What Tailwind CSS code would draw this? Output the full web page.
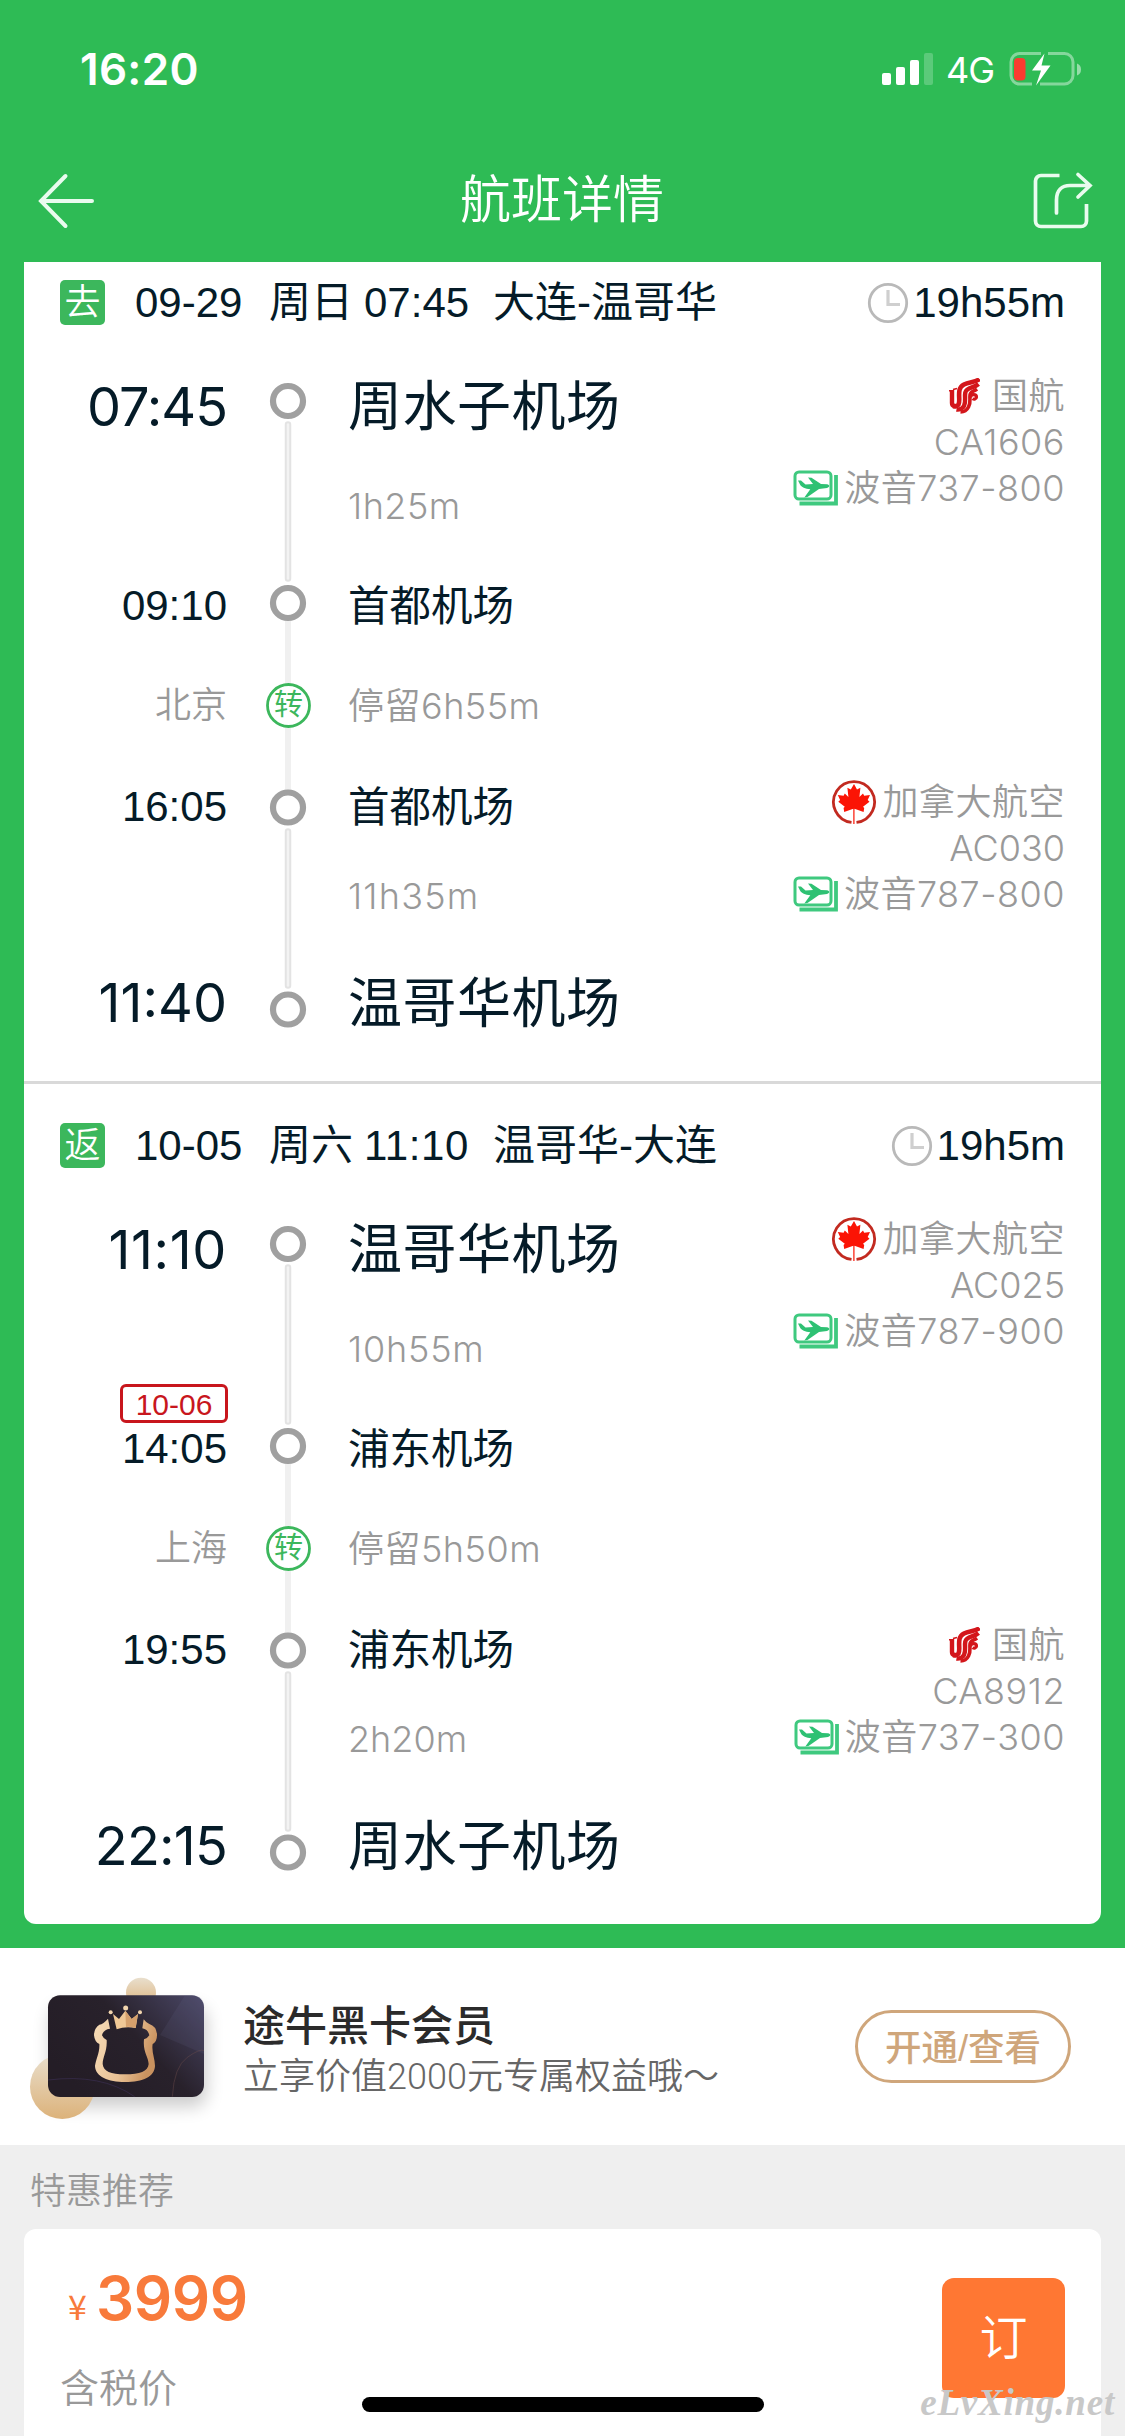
<!DOCTYPE html>
<html lang="zh-CN">
<head>
<meta charset="utf-8">
<title>航班详情</title>
<script src="https://cdn.jsdelivr.net/npm/@tailwindcss/browser@4"></script>
</head>
<body class="w-[1125px] h-[2436px] overflow-hidden relative bg-[#efefef] font-['Liberation_Sans','Noto_Sans_CJK_SC',sans-serif] text-[#051b28] whitespace-nowrap">

<svg class="hidden">
  <defs>
    <symbol id="clock" viewBox="0 0 42 42">
      <circle cx="21" cy="21" r="18.700" fill="none" stroke="#b9b9b9" stroke-width="2.800"/>
      <path d="M21 8v14.500h12" fill="none" stroke="#cfcfcf" stroke-width="3.200"/>
    </symbol>
    <symbol id="plane" viewBox="0 0 46 36">
      <rect x="2" y="2" width="36" height="27" rx="4" fill="none" stroke="#3fc97f" stroke-width="3"/>
      <path d="M43 5v28.500H6.500" fill="none" stroke="#3fc97f" stroke-width="3.800"/>
      <path d="M5 10.500l3 0 4.500 4 7.500-.5-5-6.500 3.500 .2 9.500 6.300 6 .3c3 .5 3 3 0 3.600l-8 1L14.500 27l-3.200 .4 6-8.200c-5-.3-9-2-10.300-4.700z" fill="#2ec173"/>
    </symbol>
    <symbol id="airchina" viewBox="0 0 32 36">
      <g fill="none" stroke="#d3161b">
        <path d="M1 12.800h3M5 11.500l4-1" stroke-width="1.500"/>
        <path d="M4 12v13c0 3.500 4 3.500 4.500 1" stroke-width="4.400"/>
        <path d="M31.500 1C27 5.500 13.500 3 11.500 12c-1.200 6 .8 11-1 14.500-1.200 2-3.500 2.500-5 1.500" stroke-width="4.600"/>
        <path d="M30.500 6c-5 4.500-11.500 2.500-13.200 8.500-1 5 1 9-1.300 13.500-1.500 3-5 4-7.500 3.500" stroke-width="4.400"/>
        <path d="M29 11c-4 3-6.500 2-7 6-.5 4.500 1 8-1.500 12-1.500 3-4.500 5-8 5" stroke-width="3.600"/>
        <path d="M22.500 19.500c.5-4 6-3.500 6-.3-.2 2-2.500 2.500-3.800 1.300" stroke-width="3.200"/>
      </g>
    </symbol>
    <symbol id="aircanada" viewBox="0 0 46 46">
      <path d="M20.500 43.400A20.500 20.500 0 1 1 25.500 43.400" fill="none" stroke="#c22a20" stroke-width="2.800"/>
      <path d="M23 5l3 5.500 3.400-1.700-1 9.200 3.600-3.500 1.200 2.300 5.800-.8-2.300 5 1.800 1.800-6.500 5 1.200 1.200-.6 4-9.100-3.200V45h-1.200V29.800L13.200 33l-.6-4 1.200-1.200-6.500-5 1.800-1.800-2.300-5 5.800.8 1.200-2.300 3.600 3.500-1-9.200 3.400 1.700z" fill="#fb1405"/>
    </symbol>
    <symbol id="rail" viewBox="0 0 45 739">
      <path d="M22 275v70M22 386v64" stroke="#f0f0f0" stroke-width="6"/>
      <path d="M22 82.500v154M22 489.500v154" stroke="#e3e3e3" stroke-width="6.500" stroke-linecap="round"/>
      <path d="M22 82.500v154M22 489.500v154" stroke="#f3f3f3" stroke-width="2.500" stroke-linecap="round"/>
      <g fill="#fff" stroke="#a0a0a0" stroke-width="6.200">
        <circle cx="22" cy="59" r="15"/>
        <circle cx="22" cy="261" r="15"/>
        <circle cx="22" cy="465.500" r="15"/>
        <circle cx="22" cy="667.500" r="15"/>
      </g>
      <circle cx="22.500" cy="363.500" r="21" fill="#fff" stroke="#3cb75c" stroke-width="2.800"/>
    </symbol>
  </defs>
</svg>

<div class="bg-[#2ebb55] h-[1948px] flex flex-col">
  <!-- status bar -->
  <div class="h-[132px] pt-[6px] pl-[80px] pr-[42px] flex items-center text-white">
    <div class="font-['Inter'] font-semibold text-[44px] tracking-[0.3px]">16:20</div>
    <div class="ml-auto flex items-center">
      <svg class="w-[52px] h-[34px]" viewBox="0 0 52 34">
        <rect x="0" y="21" width="9" height="12" rx="2" fill="#fff"/>
        <rect x="14" y="15" width="9" height="18" rx="2" fill="#fff"/>
        <rect x="28" y="8" width="9" height="25" rx="2" fill="#fff"/>
        <rect x="42" y="1" width="9" height="32" rx="2" fill="#fff" opacity=".22"/>
      </svg>
      <div class="font-['Inter'] text-[36px] w-[50px] ml-[12px] mr-[12px] leading-none tracking-[-1px] pt-[2px]">4G</div>
      <svg class="w-[75px] h-[36px]" viewBox="0 0 75 36">
        <path d="M33 2.500H11.500a8.500 8.500 0 0 0-8.500 8.500v13.500a8.500 8.500 0 0 0 8.500 8.500H24M40 2.500H56.500a8.500 8.500 0 0 1 8.500 8.500v13.500a8.500 8.500 0 0 1-8.500 8.500H32" fill="none" stroke="#fff" stroke-opacity=".42" stroke-width="3"/>
        <path d="M69 12.500q4 1.500 4 6t-4 6z" fill="#fff" opacity=".5"/>
        <rect x="6" y="7" width="11.500" height="22.500" rx="4" fill="#fb3b30"/>
        <path d="M36.500 2.500L24 19.500h9l-5 15L42.500 14.500h-9z" fill="#fff"/>
      </svg>
    </div>
  </div>

  <!-- title bar -->
  <div class="h-[130px] pl-[38px] pr-[32px] flex items-center justify-between">
    <svg class="w-[57px] h-[56px] mt-[7px]" viewBox="0 0 57 56" fill="none" stroke="#e9fbee" stroke-width="4" stroke-linecap="round"><path d="M54 28H3M27.500 3L3 28l24.500 25"/></svg>
    <div class="text-white text-[51px] leading-[60px] pt-[7px] pr-[4px] font-[350]">航班详情</div>
    <svg class="w-[60px] h-[60px] mt-[7px]" viewBox="0 0 60 60" fill="none" stroke="#e9fbee" stroke-width="3.700">
      <path d="M26.500 4.500H8A5.500 5.500 0 0 0 2.500 10v40A5.500 5.500 0 0 0 8 55.500h40A5.500 5.500 0 0 0 53.500 50V33"/>
      <path d="M23.500 42V29C23.500 19 29 14.500 37 14.500H56M45 3.500l12 11-12 11.500" stroke-linecap="round"/>
    </svg>
  </div>

  <!-- itinerary card -->
  <div class="mx-[24px] h-[1662px] bg-white rounded-b-[12px]">
    <section>
      <div class="h-[80px] pl-[36px] pr-[36px] flex items-center text-[42px]">
        <div class="w-[45px] h-[45px] rounded-[5px] bg-[#3cb75c] text-white text-[36px] leading-[45px] text-center font-[350]">去</div>
        <div class="ml-[30px] pt-[2px] flex leading-[50px]"><span class="w-[134px]">09-29</span><span class="w-[95px]">周日</span><span class="w-[129px]">07:45</span><span>大连-温哥华</span></div>
        <svg class="ml-auto w-[42px] h-[42px] mt-[2px]"><use href="#clock"/></svg>
        <div class="ml-[4px] pt-[2px] leading-[50px]">19h55m</div>
      </div>
      <div class="flex h-[739px] pr-[36px]">
        <div class="w-[203px] text-right text-[42px]">
          <div class="h-[128px] leading-[129px] text-[54px] font-['Inter'] tracking-[-1px]">07:45</div>
          <div class="h-[72px]"></div>
          <div class="h-[128px] leading-[128px]">09:10</div>
          <div class="h-[72px] leading-[72px] text-[36px] text-[#999] font-[350]">北京</div>
          <div class="h-[130px] leading-[130px]">16:05</div>
          <div class="h-[48px]"></div>
          <div class="h-[161px] pt-[5px] leading-[156px] text-[54px] font-['Inter']">11:40</div>
        </div>
        <div class="relative ml-[39px] w-[45px]">
          <svg class="w-[45px] h-[739px]"><use href="#rail"/></svg>
          <div class="absolute inset-x-0 top-[341px] h-[45px] leading-[44px] text-center text-[29px] text-[#3cb75c]">转</div>
        </div>
        <div class="ml-[37px] text-[41.5px]">
          <div class="h-[128px] leading-[131px] text-[54px] tracking-[0.5px]">周水子机场</div>
          <div class="h-[72px] leading-[72px] text-[36px] text-[#999] font-['Inter'] font-[350] tracking-[0.5px]">1h25m</div>
          <div class="h-[128px] leading-[130px]">首都机场</div>
          <div class="h-[72px] leading-[72px] text-[36px] text-[#999] font-['Inter','Noto_Sans_CJK_SC'] font-[350] tracking-[0.5px]">停留6h55m</div>
          <div class="h-[130px] leading-[132px]">首都机场</div>
          <div class="h-[48px] leading-[48px] text-[36px] text-[#999] font-['Inter'] font-[350] tracking-[1.2px]">11h35m</div>
          <div class="h-[161px] pt-[5px] leading-[159px] text-[54px] tracking-[0.5px]">温哥华机场</div>
        </div>
        <div class="ml-auto pt-[31px] text-[36px] leading-[46px] text-[#999] font-[350] font-['Inter','Noto_Sans_CJK_SC'] tracking-[0.5px]">
          <div class="h-[46px] flex items-center justify-end"><svg class="w-[32px] h-[36px] mr-[12px]"><use href="#airchina"/></svg>国航</div>
          <div class="h-[46px] text-right">CA1606</div>
          <div class="h-[46px] flex items-center justify-end"><svg class="w-[46px] h-[36px] mr-[5px]"><use href="#plane"/></svg>波音737-800</div>
          <div class="h-[268px]"></div>
          <div class="h-[46px] flex items-center justify-end"><svg class="w-[46px] h-[46px] mr-[5px]"><use href="#aircanada"/></svg>加拿大航空</div>
          <div class="h-[46px] text-right tracking-normal">AC030</div>
          <div class="h-[46px] flex items-center justify-end"><svg class="w-[46px] h-[36px] mr-[5px]"><use href="#plane"/></svg>波音787-800</div>
        </div>
      </div>
    </section>

    <section class="border-t-[3px] border-[#d9d9d9] pt-[21px]">
      <div class="h-[80px] pl-[36px] pr-[36px] flex items-center text-[42px]">
        <div class="w-[45px] h-[45px] rounded-[5px] bg-[#3cb75c] text-white text-[36px] leading-[45px] text-center font-[350]">返</div>
        <div class="ml-[30px] pt-[2px] flex leading-[50px]"><span class="w-[134px]">10-05</span><span class="w-[95px]">周六</span><span class="w-[129px] tracking-[0.6px]">11:10</span><span>温哥华-大连</span></div>
        <svg class="ml-auto w-[42px] h-[42px] mt-[2px]"><use href="#clock"/></svg>
        <div class="ml-[4px] pt-[2px] leading-[50px]">19h5m</div>
      </div>
      <div class="flex h-[739px] pr-[36px]">
        <div class="w-[203px] text-right text-[42px]">
          <div class="h-[128px] leading-[129px] text-[54px] font-['Inter'] tracking-[0.6px]">11:10</div>
          <div class="h-[72px]"></div>
          <div class="h-[128px] leading-[128px] relative">14:05
            <span class="absolute right-[-1px] top-[-1px] w-[108px] h-[39px] border-[3px] border-[#c8161d] rounded-[6px] text-[30px] leading-[35px] text-center text-[#c8161d]">10-06</span>
          </div>
          <div class="h-[72px] leading-[72px] text-[36px] text-[#999] font-[350]">上海</div>
          <div class="h-[130px] leading-[130px]">19:55</div>
          <div class="h-[48px]"></div>
          <div class="h-[161px] pt-[5px] leading-[156px] text-[54px] font-['Inter'] tracking-[-0.8px]">22:15</div>
        </div>
        <div class="relative ml-[39px] w-[45px]">
          <svg class="w-[45px] h-[739px]"><use href="#rail"/></svg>
          <div class="absolute inset-x-0 top-[341px] h-[45px] leading-[44px] text-center text-[29px] text-[#3cb75c]">转</div>
        </div>
        <div class="ml-[37px] text-[41.5px]">
          <div class="h-[128px] leading-[131px] text-[54px] tracking-[0.5px]">温哥华机场</div>
          <div class="h-[72px] leading-[72px] text-[36px] text-[#999] font-['Inter'] font-[350] tracking-[0.8px]">10h55m</div>
          <div class="h-[128px] leading-[130px]">浦东机场</div>
          <div class="h-[72px] leading-[72px] text-[36px] text-[#999] font-['Inter','Noto_Sans_CJK_SC'] font-[350] tracking-[0.5px]">停留5h50m</div>
          <div class="h-[130px] leading-[132px]">浦东机场</div>
          <div class="h-[48px] leading-[48px] text-[36px] text-[#999] font-['Inter'] font-[350]">2h20m</div>
          <div class="h-[161px] pt-[5px] leading-[159px] text-[54px] tracking-[0.5px]">周水子机场</div>
        </div>
        <div class="ml-auto pt-[31px] text-[36px] leading-[46px] text-[#999] font-[350] font-['Inter','Noto_Sans_CJK_SC'] tracking-[0.5px]">
          <div class="h-[46px] flex items-center justify-end"><svg class="w-[46px] h-[46px] mr-[5px]"><use href="#aircanada"/></svg>加拿大航空</div>
          <div class="h-[46px] text-right tracking-normal">AC025</div>
          <div class="h-[46px] flex items-center justify-end"><svg class="w-[46px] h-[36px] mr-[5px]"><use href="#plane"/></svg>波音787-900</div>
          <div class="h-[268px]"></div>
          <div class="h-[46px] flex items-center justify-end"><svg class="w-[32px] h-[36px] mr-[12px]"><use href="#airchina"/></svg>国航</div>
          <div class="h-[46px] text-right">CA8912</div>
          <div class="h-[46px] flex items-center justify-end"><svg class="w-[46px] h-[36px] mr-[5px]"><use href="#plane"/></svg>波音737-300</div>
        </div>
      </div>
    </section>
  </div>
</div>

<!-- membership banner -->
<div class="h-[197px] bg-white flex pl-[20px] pr-[54px]">
  <svg class="mt-[12px] w-[210px] h-[180px] shrink-0" viewBox="0 0 630 540">
    <defs>
      <linearGradient id="gold" x1="0" y1="0" x2="0" y2="1"><stop offset="0" stop-color="#e9dfcd"/><stop offset="1" stop-color="#dcb27a"/></linearGradient>
      <linearGradient id="black" x1="0" y1=".6" x2="1" y2="0"><stop offset="0" stop-color="#241d26"/><stop offset=".5" stop-color="#28212b"/><stop offset="1" stop-color="#4b4868"/></linearGradient>
      <linearGradient id="bull" x1="0" y1="0" x2="1" y2=".3"><stop offset="0" stop-color="#f6dcb8"/><stop offset=".6" stop-color="#e9c295"/><stop offset="1" stop-color="#c9925f"/></linearGradient>
      <filter id="soft" x="-30%" y="-30%" width="160%" height="170%"><feGaussianBlur stdDeviation="26"/></filter>
    </defs>
    <rect x="90" y="140" width="470" height="300" rx="40" fill="#000" opacity=".2" filter="url(#soft)"/>
    <circle cx="363" cy="98" r="45" fill="url(#gold)"/>
    <circle cx="127" cy="380" r="97" fill="url(#gold)"/>
    <rect x="84" y="106" width="468" height="305" rx="36" fill="url(#black)"/>
    <path d="M495 106h21q36 0 36 36v140L420 225z" fill="#6b6a90" opacity=".14"/>
    <path d="M84 360q160-20 260 50" fill="none" stroke="#4a3a70" stroke-width="2" opacity=".6"/>
    <path d="M457 410q5-90 45-118t50-20" fill="none" stroke="#75504f" stroke-width="2" opacity=".6"/>
    <path fill-rule="evenodd" fill="url(#bull)" d="M264 176Q250 192 238 194Q222 205 222 226Q224 246 238 252C240 275 227 300 225 318C226 350 265 366 315 366C370 366 403 350 405 318C405 295 394 275 398 252Q412 244 411 222Q408 198 388 192Q378 188 371 178L367 205Q384 208 388 226Q382 236 372 238C368 275 385 290 386 312C384 334 360 343 315 343C272 343 250 334 248 312C248 290 262 275 260 240Q250 236 246 226Q250 208 270 206z"/>
    <path d="M279 162L297 177 316 152 335 177 354 162 347 204Q316 198 290 208z" fill="#efc896"/>
    <path d="M316 152L335 177 354 162 347 204Q330 199 318 201z" fill="#d5a06c"/>
    <circle cx="317" cy="144" r="7.500" fill="#f2d5ae"/><circle cx="272" cy="157" r="6" fill="#f2d5ae"/><circle cx="360" cy="157" r="6" fill="#f2d5ae"/>
  </svg>
  <div class="ml-[13px] pt-[53px]">
    <div class="text-[42px] leading-[52px] font-medium text-[#2b2b2b]">途牛黑卡会员</div>
    <div class="text-[36px] leading-[48px] text-[#666] font-[350] font-['Roboto','Noto_Sans_CJK_SC']">立享价值2000元专属权益哦～</div>
  </div>
  <div class="ml-auto mt-[62px] w-[216px] h-[73px] rounded-full border-[3px] border-[#cfa67b] text-[#cfa67b] text-[36.5px] leading-[71px] text-center font-medium">开通/查看</div>
</div>

<!-- offers -->
<div class="h-[84px] pl-[30px] pt-[22px] text-[36px] leading-[50px] text-[#999] font-[350]">特惠推荐</div>
<div class="mx-[24px] h-[207px] bg-white rounded-t-[12px] flex justify-between pl-[36px] pr-[36px]">
  <div class="pt-[34px]">
    <div class="flex items-baseline text-[#f87a3b] leading-[70px] pl-[8px]"><span class="text-[34px] w-[28px] font-['Noto_Sans_CJK_SC'] leading-none">¥</span><span class="font-['Inter'] font-semibold text-[60px] tracking-[-0.4px]">3999</span></div>
    <div class="text-[39px] leading-[50px] mt-[31px] text-[#999] font-[350]">含税价</div>
  </div>
  <div class="mt-[49px] w-[123px] h-[120px] rounded-[12px] bg-[#ff7733] text-white text-[48px] leading-[122px] text-center font-[350]">订</div>
</div>

<div class="absolute left-[362px] top-[2397px] w-[402px] h-[15px] rounded-full bg-black"></div>
<div class="absolute right-[10px] top-[2381px] text-[37px] leading-[44px] tracking-[0.8px] font-bold italic text-[#c8c8c8] font-['Z003','URW_Chancery_L','Liberation_Serif',serif]">eLvXing.net</div>
</body>
</html>
